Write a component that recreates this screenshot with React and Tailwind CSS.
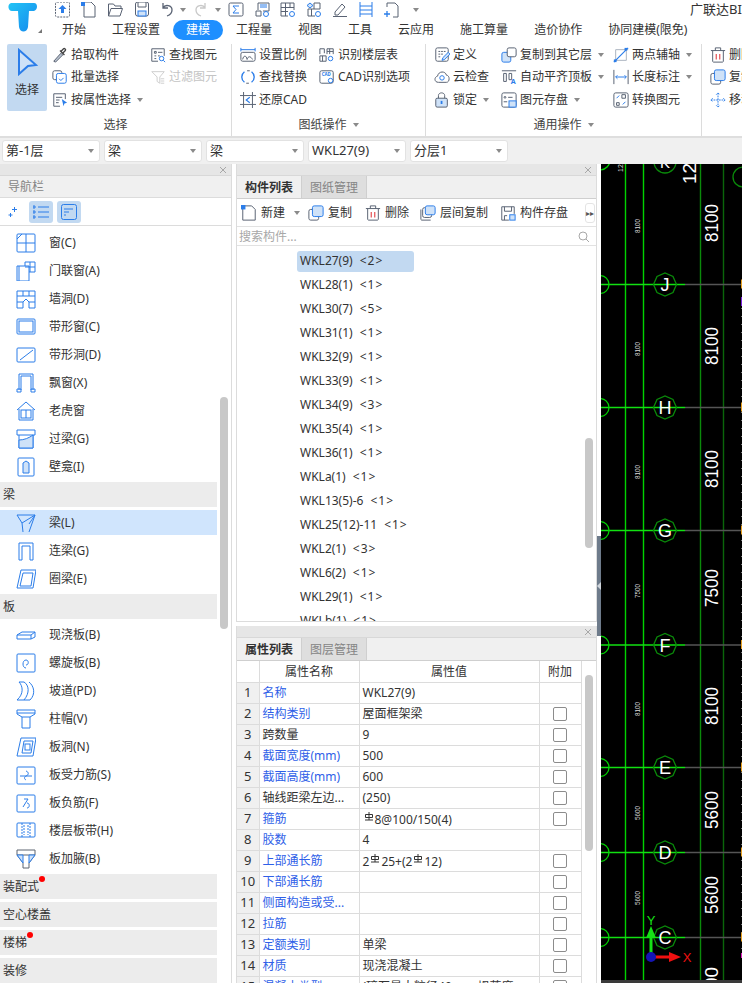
import { Fragment } from 'react';

const D = '#596273';
const B = '#2b7de9';
const L = '#cfe2f8';

const Ic = ({ children }) => (
  <span className="w-[18px] shrink-0 flex justify-start">
    <svg width="16" height="16" viewBox="0 0 18 18" fill="none" stroke={D} strokeWidth="1.1" className="shrink-0">
      {children}
    </svg>
  </span>
);

const Caret = () => <span className="inline-block w-0 h-0 border-x-[3px] border-x-transparent border-t-[4px] border-t-[#8a8a8a]" />;

const Rebar = () => (
  <svg width="10" height="10" viewBox="0 0 10 10" fill="none" stroke="#333" strokeWidth="1" className="inline-block align-[3px] mx-[1px]">
    <path d="M1 9h8M5 1v8M1.5 3.5h7v3h-7z" />
  </svg>
);

// top quick access bar
const quick = [
  <><rect x="1.5" y="-1" width="14" height="15" rx="1.5" strokeDasharray="2 1" /><path d="M8.5 2l4 4h-2.5v4h-3v-4h-2.5z" fill={B} stroke="none" /></>,
  <><path d="M3 -1h7l4 4v11h-11z" /><rect x="0" y="-1" width="4" height="4" fill={B} stroke="none" /></>,
  <><path d="M1.5 13v-12h5l1.5 2h6v2M1.5 13l2.500-7.5h11.5l-2.5 7.5z" /></>,
  <><rect x="1.5" y="-1" width="13" height="14" rx="2" /><path d="M4 -1v5h8v-5" /><rect x="4" y="8" width="8" height="5" fill={L} stroke={B} /></>,
];

const QuickIcon = ({ children }) => (
  <svg width="16" height="16" viewBox="0 -1 16 16" fill="none" stroke={D} strokeWidth="1" className="shrink-0">{children}</svg>
);

const Undo = ({ color = D }) => (
  <svg width="13" height="16" viewBox="0 0 13 16" fill="none" stroke={color} strokeWidth="1.3">
    <path d="M3 1v5h5M3 6c2-4 9-3 9 2c0 3-2 5-5 6" />
  </svg>
);

const TopBar = () => (
  <div className="h-[20px] flex items-center overflow-hidden">
    <div className="w-[5px]" />
    {quick.map((q, i) => (
      <div key={i} className="w-[26.5px] flex"><QuickIcon>{q}</QuickIcon></div>
    ))}
    <div className="w-[20px] flex"><Undo /></div>
    <div className="w-[15px] flex"><Caret /></div>
    <div className="w-[20px] flex -scale-x-100 justify-end"><Undo color="#c8c8c8" /></div>
    <div className="w-[13px] flex"><Caret /></div>
    <div className="w-[26px] flex"><QuickIcon><rect x="1" y="0" width="14" height="13" rx="1.5" stroke={D} /><path d="M11 3H5l3 3.5-3 3.5h6" stroke={B} /></QuickIcon></div>
    <div className="w-[26px] flex"><QuickIcon><path d="M2 13V8h5v5H2M4 7V0h11v8H9" /><path d="M6 2h7M6 4h7" stroke={B} /><circle cx="12" cy="11" r="2.5" stroke={B} /></QuickIcon></div>
    <div className="w-[26px] flex"><QuickIcon><path d="M1 0h13v7M1 0v13h7M1 4.5h13M1 8.5h7M5.5 0v13M10 0v4.5" /><circle cx="12" cy="11" r="2.5" stroke={B} /></QuickIcon></div>
    <div className="w-[26px] flex"><QuickIcon><path d="M2 6h12M2 6v7h7M8 6V0h6v6M5.5 6v7" /><path d="M4 0l3 2.5-3 2.5-3-2.5z" fill={L} stroke={B} /><circle cx="12" cy="11" r="2.5" stroke={B} /></QuickIcon></div>
    <div className="w-[26px] flex"><QuickIcon><path d="M3 9l7-8 3 3-7 8H3zM1 13.5h14" /></QuickIcon></div>
    <div className="w-[26px] flex"><QuickIcon><path d="M2 -1v15M14 -1v15M2 3h12M2 7h12M2 11h12" stroke={B} /></QuickIcon></div>
    <div className="w-[29px] flex"><QuickIcon><path d="M3 4V0h8l3 3v11H9" /><path d="M3 8v6M0 11h6" stroke={B} strokeWidth="1.3" /></QuickIcon></div>
    <div className="flex"><Caret /></div>
    <div className="ml-auto text-[13px] text-[#333] whitespace-nowrap w-[52px] overflow-hidden">广联达BIM</div>
  </div>
);

const tabs = ['开始', '工程设置', '建模', '工程量', '视图', '工具', '云应用', '施工算量', '造价协作', '协同建模(限免)'];

// ribbon icons
const icons = {
  pick: <><path d="M2 16l8-9 2 2-8 8z" fill="#b9c2cf" /><path d="M10 5l3-3c1-1 3 1 2 2l-3 3zM9 4l5 5" stroke="#444" strokeWidth="1.5" /></>,
  batch: <><rect x="1" y="2" width="10" height="10" rx="2" stroke={D} /><rect x="5" y="5" width="11" height="11" rx="2" fill="#fff" stroke={B} /><path d="M8 11l2 2 3-3" stroke={B} /></>,
  attr: <><path d="M15 8V2H2v14h7M4.5 6h7M4.5 9h4M4.5 12h3" /><path d="M11 8l6 4-3 1-1 3z" fill={B} stroke="none" /></>,
  find: <><path d="M9 16H2V2h14v8" /><path d="M5 5h2v2H5zM9 6h5M5 10h2M5 13h2M9 10h2" /><circle cx="13" cy="13" r="2.5" stroke={B} /><path d="M15 15l2 2" stroke={B} /></>,
  filter: <path d="M2 3h14l-5 6v7l-3-2V9zM12 11h4M12 13.5h4M12 16h4" stroke="#cfcfcf" />,
  scale: <><path d="M1 3h16M1 1v4M17 1v4" stroke={B} /><rect x="1" y="6" width="16" height="10" rx="2" /><path d="M3 14c1-5 4-5 5 0c1-4 4-4 6 0" /></>,
  replace: <><path d="M5 3C1 6 1 12 5 15M13 15c4-3 4-9 0-12" stroke={B} strokeWidth="1.5" /><path d="M8 2h3M7 16h3" /></>,
  restore: <><path d="M4 0v18M14 0v18M0 4h18M0 14h18" /><path d="M11 6L7 9l4 3" stroke={B} strokeWidth="1.3" /></>,
  layer: <><path d="M1 2h5v5M1 2v6M1 10h7v6H1zM4 10v6M9 8V2h7v6M9 5h7M12 2v6" /><circle cx="13" cy="13" r="2.5" stroke={B} /></>,
  cadopt: <><rect x="1" y="2" width="15" height="14" rx="2" /><text x="3" y="8" fontSize="5" fill={B} stroke="none" fontWeight="700">CAD</text><circle cx="13" cy="13" r="2.5" fill="#fff" stroke={B} /></>,
  define: <><rect x="2" y="1" width="14" height="15" rx="2" /><path d="M5 5h8M5 8h6M5 11h3" strokeDasharray="2 1" /><path d="M9 15l1-3 6-6 2 2-6 6z" fill={L} stroke={B} /></>,
  cloud: <><path d="M5 15c-5 0-5-6-1-7c1-6 9-6 10-1c4 0 4 8 0 8z" /><circle cx="9" cy="10" r="2.5" stroke={B} /></>,
  lock: <><rect x="2" y="7" width="13" height="10" rx="1.5" fill={L} stroke={D} /><path d="M5 7V4c0-4 7-4 7 0v3" /><rect x="7.5" y="10" width="2" height="3.5" fill={B} stroke="none" /></>,
  copyto: <><rect x="1" y="6" width="10" height="11" rx="2" fill={L} stroke={B} /><rect x="7" y="1" width="10" height="10" rx="2" fill="#fff" stroke={D} /></>,
  align: <><path d="M1 2h16M3 5h3v9H3zM9 5h3v7H9z" /><text x="11" y="17" fontSize="8" fontWeight="700" fill={B} stroke="none">A</text></>,
  store: <><rect x="1" y="1" width="16" height="16" rx="2" /><circle cx="4.5" cy="6" r="1" /><path d="M8 6h5M7 11H3" /><rect x="9" y="10" width="8" height="7" fill={L} stroke={B} /></>,
  twopt: <><path d="M3 3v13M3 3h14M15 3v12M1 15h14" stroke="#aab3bf" /><path d="M1 17L17 1" stroke={B} strokeWidth="1.3" /><rect x="13" y="1" width="3" height="3" fill={B} stroke="none" /><rect x="1" y="14" width="3" height="3" fill={B} stroke="none" /></>,
  length: <><path d="M1 1v16M17 1v16" /><path d="M3 9h12M5 7L3 9l2 2M13 7l2 2-2 2" stroke={B} /></>,
  convert: <><rect x="1" y="1" width="16" height="16" rx="2" /><path d="M4 12h3v3H4zM10 3h4v4h-4z" /><path d="M11 14l3-3M7 4L4 7" stroke={B} /></>,
  del: <><path d="M3 4v12c0 1 1 1 1 1h10s1 0 1-1V4M1 4h16M6 4V1h6v3" /><path d="M7 8v6M11 8v6" stroke="#e0393e" strokeWidth="1.2" /></>,
  copy: <><rect x="1" y="5" width="11" height="12" rx="2" stroke={D} /><rect x="5" y="1" width="12" height="12" rx="2" fill={L} stroke={B} /></>,
  move: <path d="M9 1v16M1 9h16M7 3l2-2 2 2M7 15l2 2 2-2M3 7L1 9l2 2M15 7l2 2-2 2" stroke={B} strokeDasharray="2 1" />,
  create: <><path d="M4 1h8l4 4v12H2V4" /><rect x="0" y="0" width="5" height="5" fill={B} stroke="none" /></>,
  floorcopy: <><path d="M1 5v11c0 1 1 1 1 1h10" /><rect x="3" y="3" width="10" height="11" rx="2" stroke={D} fill="#fff" /><rect x="6" y="1" width="11" height="10" rx="2" fill={L} stroke={B} /></>,
  save: <><path d="M10 17H2V2h14v8M5 2v5h8V2M5 17v-5h3" /><rect x="11" y="11" width="6" height="6" fill={L} stroke={B} /></>,
};

const RibbonItem = ({ icon, label, caret, off }) => (
  <div className="h-[22.5px] flex items-center gap-[1px] whitespace-nowrap">
    <Ic>{icons[icon]}</Ic>
    <span className={off ? 'text-[#c4c4c4]' : ''}>{label}</span>
    {caret && <span className="ml-[5px] flex"><Caret /></span>}
  </div>
);

const Col = ({ w, items }) => (
  <div className={w}>
    {items.map((it) => <RibbonItem key={it.label} {...it} />)}
  </div>
);

const Group = ({ w, label, caret, children }) => (
  <div className={`${w} shrink-0 h-[92px] border-r border-[#dcdcdc] flex flex-col`}>
    <div className="h-[69px] flex pl-[8px]">{children}</div>
    <div className="h-[23px] pt-[1px] flex items-center justify-center gap-[6px] text-[#444]">
      {label}{caret && <Caret />}
    </div>
  </div>
);

const Ribbon = () => (
  <div className="h-[98px] bg-white flex pt-[3.5px] text-[12px] text-[#333] overflow-hidden border-b-2 border-[#dedede]">
    <div className="w-[232px] shrink-0 h-[92px] border-r border-[#dcdcdc] flex flex-col">
      <div className="h-[69px] flex pl-[7px]">
        <div className="w-[40px] h-[67px] mt-[0.5px] bg-[#c2d9f1] rounded-[2px] flex flex-col items-center pt-[4px]">
          <svg width="22" height="28" viewBox="0 0 22 28" fill="none" stroke={B} strokeWidth="2">
            <path d="M3 2l17 15-8 1-9 8z" fill="#cfe2f8" />
          </svg>
          <span className="mt-[5px] text-[#333]">选择</span>
        </div>
        <div className="w-[5px]" />
        <Col w="w-[98px]" items={[
          { icon: 'pick', label: '拾取构件' },
          { icon: 'batch', label: '批量选择' },
          { icon: 'attr', label: '按属性选择', caret: true },
        ]} />
        <Col w="w-[80px]" items={[
          { icon: 'find', label: '查找图元' },
          { icon: 'filter', label: '过滤图元', off: true },
        ]} />
      </div>
      <div className="h-[23px] pt-[1px] flex items-center justify-center text-[#444]">选择</div>
    </div>
    <Group w="w-[194px]" label="图纸操作" caret>
      <Col w="w-[79px]" items={[
        { icon: 'scale', label: '设置比例' },
        { icon: 'replace', label: '查找替换' },
        { icon: 'restore', label: '还原CAD' },
      ]} />
      <Col w="w-[100px]" items={[
        { icon: 'layer', label: '识别楼层表' },
        { icon: 'cadopt', label: 'CAD识别选项' },
      ]} />
    </Group>
    <Group w="w-[276px]" label="通用操作" caret>
      <Col w="w-[67px]" items={[
        { icon: 'define', label: '定义' },
        { icon: 'cloud', label: '云检查' },
        { icon: 'lock', label: '锁定', caret: true },
      ]} />
      <Col w="w-[112px]" items={[
        { icon: 'copyto', label: '复制到其它层', caret: true },
        { icon: 'align', label: '自动平齐顶板', caret: true },
        { icon: 'store', label: '图元存盘', caret: true },
      ]} />
      <Col w="w-[85px]" items={[
        { icon: 'twopt', label: '两点辅轴', caret: true },
        { icon: 'length', label: '长度标注', caret: true },
        { icon: 'convert', label: '转换图元' },
      ]} />
    </Group>
    <div className="pl-[8px]">
      <Col w="w-[40px]" items={[
        { icon: 'del', label: '删除' },
        { icon: 'copy', label: '复制' },
        { icon: 'move', label: '移动' },
      ]} />
    </div>
  </div>
);

const selects = ['第-1层', '梁', '梁', 'WKL27(9)', '分层1'];

const SelectBar = () => (
  <div className="h-[26px] flex gap-[4px] pl-[2px] pt-[2px] bg-[#f0f0f0]">
    {selects.map((s, i) => (
      <div key={i} className="w-[98px] h-[22px] bg-white rounded-[3px] border border-[#e2e2e2] flex items-center justify-between pl-[3px] pr-[5px] text-[13px] text-[#333]">
        {s}
        <Caret />
      </div>
    ))}
  </div>
);

// nav list icons
const nav = {
  win: <><rect x="1" y="1" width="18" height="18" rx="1" /><path d="M10 1v18M1 10h18M1 6l5-5" /></>,
  door: <><path d="M1 5h12v15H1zM3 5v15" /><path d="M9 5V1h10v10h-6M14 1v10M9 6h10" /></>,
  hole: <><path d="M1 2h18v17h-6v-6l-3-3-3 3v6H1zM1 7h18M1 13h6M13 13h6M7 2v5M13 2v5" /></>,
  band: <><rect x="1" y="2" width="18" height="15" rx="1" /><rect x="3" y="4" width="14" height="11" /></>,
  bandh: <><rect x="1" y="3" width="18" height="14" rx="1" /><path d="M4 15L17 5" /></>,
  bay: <><path d="M3 17V1h14v16M5 17V3h10v14M1 16h4v3H1zM15 16h4v3h-4z" /></>,
  dormer: <><path d="M1 9l9-8 9 8M3 8v11h14V8" /><rect x="5" y="9" width="10" height="8" /><path d="M10 9v8" /></>,
  lintel: <><path d="M1 1h18v5H1zM3 6v13h14V6" /><path d="M3 19v-8c5 0 10-2 14-5v13z" fill={L} /></>,
  niche: <><rect x="2" y="1" width="16" height="18" rx="1" /><path d="M7 16V6l3-2 3 2v10z" fill={L} /></>,
  beam: <><path d="M1 2h18l-13 8zM19 2L13 19M6 10l1 9M19 2l-6 9" /></>,
  link: <><path d="M3 19V2h14v17h-3V5H6v14z" /></>,
  ring: <><path d="M5 1h15l-3 18H1z" /><path d="M7 4h10l-2 13H4z" /></>,
  slab: <><path d="M1 10l5-3h13v5l-4 2H1zM1 10h14l4-3M15 10v4" /></>,
  spiral: <><rect x="1" y="1" width="18" height="18" rx="1" /><path d="M10 12c3 0 3-5 0-5c-4 0-4 8 0 8" /></>,
  ramp: <><path d="M8 1c5 3 6 11 0 18H1c7-6 6-14 2-18zM13 1c5 4 7 12 1 18h-6" /></>,
  cap: <><path d="M1 1h18v4l-5 3v11H6V8L1 5zM1 4h18M6 8h8" /></>,
  shole: <><path d="M5 1h15l-3 18H1z" /><path d="M8 4h9l-2 12H6z" /><rect x="9" y="7" width="5" height="6" /></>,
  force: <><rect x="1" y="2" width="18" height="17" rx="1" /><path d="M4 11h12M10 6c3 1 3 4 0 5c-2 1-2 3 0 4" /></>,
  neg: <><rect x="1" y="2" width="18" height="17" rx="1" /><path d="M8 6h4l-5 8M11 10c3 0 3 5 0 5" /></>,
  strip: <><rect x="1" y="2" width="18" height="14" rx="1" /><path d="M6 2v14M14 2v14M8 4v10M12 4v10" strokeDasharray="2 1" /></>,
  haunch: <><path d="M1 1h18v5l-6 8v5H7v-5L1 6z" stroke="#5c6470" /><path d="M1 6h18" stroke="#5c6470" /><path d="M1 6h6v8zM19 6h-6v8z" fill={L} stroke={B} /></>,
};

const navItems = [
  ['win', '窗(C)'], ['door', '门联窗(A)'], ['hole', '墙洞(D)'], ['band', '带形窗(C)'], ['bandh', '带形洞(D)'],
  ['bay', '飘窗(X)'], ['dormer', '老虎窗'], ['lintel', '过梁(G)'], ['niche', '壁龛(I)'],
  [null, '梁'], ['beam', '梁(L)', true], ['link', '连梁(G)'], ['ring', '圈梁(E)'],
  [null, '板'], ['slab', '现浇板(B)'], ['spiral', '螺旋板(B)'], ['ramp', '坡道(PD)'], ['cap', '柱帽(V)'],
  ['shole', '板洞(N)'], ['force', '板受力筋(S)'], ['neg', '板负筋(F)'], ['strip', '楼层板带(H)'], ['haunch', '板加腋(B)'],
  [null, '装配式', false, 'left-[39px]'], [null, '空心楼盖'], [null, '楼梯', false, 'left-[27px]'], [null, '装修'],
];

const CloseBar = () => (
  <div className="h-[12px] shrink-0 bg-[#e6e6e6] border-b border-[#d8d8d8] flex items-center justify-end pr-[4px]">
    <svg width="8" height="8" viewBox="0 0 8 8" stroke="#a8a8a8"><path d="M1 1l6 6M7 1L1 7" /></svg>
  </div>
);

const NavPanel = () => (
  <div className="w-[232px] shrink-0 h-full bg-white border-r border-[#dcdcdc] flex flex-col text-[12px] text-[#333] relative overflow-hidden">
    <CloseBar />
    <div className="h-[22px] shrink-0 pt-[1px] bg-[#f0f0f0] border-b border-[#dcdcdc] flex items-center pl-[8px] text-[#858585]">导航栏</div>
    <div className="h-[28px] shrink-0 border-b border-[#dcdcdc] flex items-center">
      <svg width="10" height="12" viewBox="0 0 10 12" stroke={B} className="ml-[8px]"><path d="M6.5 1v5M4 3.5h5M2.5 7v4M.5 9h4" /></svg>
      <div className="ml-[11px] w-[24px] h-[22px] bg-[#c2d9f1] rounded-[3px] flex items-center justify-center">
        <svg width="16" height="14" viewBox="0 0 16 14" fill="none" stroke={B}><path d="M5 2h11M5 7h11M5 12h11M0 1h2v2H0zM0 6h2v2H0zM0 11h2v2H0z" /></svg>
      </div>
      <div className="ml-[4px] w-[24px] h-[22px] bg-[#c2d9f1] rounded-[3px] flex items-center justify-center">
        <svg width="16" height="16" viewBox="0 0 16 16" fill="none" stroke={B}><rect x=".5" y=".5" width="15" height="15" rx="2" /><path d="M3 5h9M3 8h5M3 11h2" /></svg>
      </div>
    </div>
    <div className="pt-[4px]">
      {navItems.map(([ic, label, active, dot]) => (
        ic ? (
          <div key={label} className={`w-[217px] h-[25px] mb-[3px] flex items-center pl-[16px] ${active ? 'bg-[#d0e5fd]' : ''}`}>
            <svg width="20" height="20" viewBox="0 0 20 20" fill="none" stroke={B} strokeWidth="1" className="shrink-0">{nav[ic]}</svg>
            <span className="ml-[13px]">{label}</span>
          </div>
        ) : (
          <div key={label} className="w-[217px] h-[25px] mb-[3px] flex items-center pl-[3px] bg-[#ececec] relative">
            {label}
            {dot && <span className={`absolute top-[2px] ${dot} w-[6px] h-[6px] rounded-full bg-[#f00]`} />}
          </div>
        )
      ))}
    </div>
    <div className="absolute left-[220px] top-[233px] w-[8px] h-[232px] rounded-[4px] bg-[#c8c8c8]" />
  </div>
);

const TabRow = ({ a, b }) => (
  <div className="h-[23px] shrink-0 bg-[#f0f0f0] border-b border-[#cfcfcf] flex text-[12px]">
    <div className="w-[65px] pt-[1px] flex items-center justify-center font-bold text-[#333] border-r border-[#cfcfcf]">{a}</div>
    <div className="w-[65px] pt-[1px] flex items-center justify-center bg-[#dedede] text-[#858585] border-r border-[#cfcfcf]">{b}</div>
  </div>
);

const tools = [
  ['create', '新建', 'w-[67px]', true],
  ['copy', '复制', 'w-[57px]'],
  ['del', '删除', 'w-[55px]'],
  ['floorcopy', '层间复制', 'w-[80px]'],
  ['save', '构件存盘', 'w-[85px]'],
];

const comps = [
  ['WKL27(9)', 2], ['WKL28(1)', 1], ['WKL30(7)', 5], ['WKL31(1)', 1], ['WKL32(9)', 1], ['WKL33(9)', 1],
  ['WKL34(9)', 3], ['WKL35(4)', 1], ['WKL36(1)', 1], ['WKLa(1)', 1], ['WKL13(5)-6', 1], ['WKL25(12)-11', 1],
  ['WKL2(1)', 3], ['WKL6(2)', 1], ['WKL29(1)', 1], ['WKLb(1)', 1],
];

const ComponentPanel = () => (
  <div className="h-[458px] shrink-0 flex flex-col bg-white border-x border-b border-[#dcdcdc] relative overflow-hidden text-[12px] text-[#333]">
    <CloseBar />
    <TabRow a="构件列表" b="图纸管理" />
    <div className="h-[28px] shrink-0 pt-[1px] flex items-center pl-[4px] border-b border-[#e2e2e2]">
      {tools.map(([ic, label, w, caret]) => (
        <div key={label} className={`${w} flex items-center gap-[2px]`}>
          <Ic>{icons[ic]}</Ic>
          <span>{label}</span>
          {caret && <span className="ml-[7px] flex"><Caret /></span>}
        </div>
      ))}
      <div className="w-[10px] h-[20px] border border-[#e4e4e4] rounded-[3px] flex items-center justify-center text-[8px] text-[#555]">▸▸</div>
    </div>
    <div className="h-[19px] shrink-0 pt-[1px] flex items-center justify-between pl-[2px] pr-[7px] border-b border-[#e2e2e2] text-[#a8a8a8]">
      搜索构件...
      <svg width="11" height="11" viewBox="0 0 11 11" fill="none" stroke="#a8a8a8"><circle cx="5" cy="5" r="4" /><path d="M8 8l3 3" /></svg>
    </div>
    <div className="pt-[3px] pl-[60px]">
      {comps.map(([name, n], i) => (
        <div key={name} className="h-[24px] flex items-center">
          <div className={`h-[21px] flex items-center pl-[3px] rounded-[3px] whitespace-nowrap ${i === 0 ? 'w-[117px] bg-[#c2d9f1]' : ''}`}>
            {name}<span className="ml-[7px] tracking-[1px]">{`<${n}>`}</span>
          </div>
        </div>
      ))}
    </div>
    <div className="absolute left-[348px] top-[274px] w-[8px] h-[110px] rounded-[4px] bg-[#c8c8c8]" />
  </div>
);

const props = [
  ['名称', 'WKL27(9)', 1, 0],
  ['结构类别', '屋面框架梁', 1, 1],
  ['跨数量', '9', 0, 1],
  ['截面宽度(mm)', '500', 1, 1],
  ['截面高度(mm)', '600', 1, 1],
  ['轴线距梁左边...', '(250)', 0, 1],
  ['箍筋', <Fragment><Rebar />8@100/150(4)</Fragment>, 1, 1],
  ['胶数', '4', 1, 0],
  ['上部通长筋', <Fragment>2<Rebar />25+(2<Rebar />12)</Fragment>, 1, 1],
  ['下部通长筋', '', 1, 1],
  ['侧面构造或受...', '', 1, 1],
  ['拉筋', '', 1, 1],
  ['定额类别', '单梁', 1, 1],
  ['材质', '现浇混凝土', 1, 1],
  ['混凝土类型', '(碎石最大粒径40mm 坍落度...', 1, 1],
];

const PropPanel = () => (
  <div className="flex-1 min-h-0 mt-[4px] flex flex-col bg-white border-x border-[#dcdcdc] relative overflow-hidden text-[12px] text-[#333]">
    <CloseBar />
    <TabRow a="属性列表" b="图层管理" />
    <table className="table-fixed border-collapse w-[344px]">
      <thead>
        <tr className="h-[21px]">
          <th className="w-[22px] border border-[#dcdcdc] border-l-0 border-t-0" />
          <th className="w-[100px] pt-[2px] border border-[#dcdcdc] border-t-0 font-normal">属性名称</th>
          <th className="w-[180px] pt-[2px] border border-[#dcdcdc] border-t-0 font-normal">属性值</th>
          <th className="w-[42px] pt-[2px] border border-[#dcdcdc] border-t-0 font-normal">附加</th>
        </tr>
      </thead>
      <tbody>
        {props.map(([name, val, blue, box], i) => (
          <tr key={i} className="h-[21px]">
            <td className="border border-[#dcdcdc] border-l-0 bg-[#f0f0f0] text-center text-[13px] leading-none">{i + 1}</td>
            <td className={`border border-[#dcdcdc] pl-[3px] leading-none whitespace-nowrap ${blue ? 'text-[#2f5fe8]' : ''}`}>{name}</td>
            <td className="border border-[#dcdcdc] pl-[3px] leading-none whitespace-nowrap">{val}</td>
            <td className="border border-[#dcdcdc] leading-none">
              {box ? <div className="w-[14px] h-[14px] mx-auto border border-[#8c8c8c] rounded-[2px] bg-white" /> : null}
            </td>
          </tr>
        ))}
      </tbody>
    </table>
    <div className="absolute left-[348px] top-[49px] w-[8px] h-[176px] rounded-[4px] bg-[#c8c8c8]" />
  </div>
);

const rows = [
  [284.5, 'J'], [407.5, 'H'], [530.5, 'G'], [645, 'F'], [767.5, 'E'], [852.5, 'D'], [937.5, 'C'],
];
const dims = [
  [223, '8100'], [346, '8100'], [469, '8100'], [588, '7500'], [706, '8100'], [810, '5600'], [895, '5600'],
];

const Canvas = () => (
  <div className="flex-1 h-full bg-black overflow-hidden">
    <svg viewBox="601 164 141 819" className="block w-full h-full" fontFamily="'Liberation Sans', sans-serif">
      <rect x="601" y="164" width="141" height="819" fill="#000" />
      <path d="M625.5 164V983M643.5 164V983" stroke="#00d200" strokeWidth="1.4" />
      <path d="M700.5 164V983" stroke="#0a8a0a" strokeWidth="1.4" />
      <path d="M723.5 164V983" stroke="#0a660a" strokeWidth="1.4" />
      <path d="M741.5 300V960" stroke="#777" strokeDasharray="1 7" />
      <rect x="741" y="297" width="1" height="9" fill="#7a22dd" />
      <circle cx="665" cy="162" r="11" stroke="#0a8a0a" strokeWidth="1.3" fill="none" />
      <text x="665" y="168" fontSize="15" fill="#fff" textAnchor="middle">K</text>
      <circle cx="600" cy="160" r="10" stroke="#00d200" strokeWidth="1.3" fill="none" />
      <circle cx="743" cy="177" r="10" stroke="#0a8a0a" strokeWidth="1.3" fill="none" />
      {rows.map(([y, l]) => (
        <g key={l}>
          <path d={`M601 ${y}H685`} stroke="#12e012" strokeWidth="1.3" />
          <path d={`M685 ${y}H742`} stroke="#555" strokeWidth="1.3" />
          <circle cx="600" cy={y} r="9" stroke="#00d200" strokeWidth="1.3" fill="none" />
          <polygon
            points={`${665 + 11.5},${y} ${665 + 8},${y - 8} ${665},${y - 11.5} ${665 - 8},${y - 8} ${665 - 11.5},${y} ${665 - 8},${y + 8} ${665},${y + 11.5} ${665 + 8},${y + 8}`}
            stroke="#0a8a0a"
            strokeWidth="1.3"
            fill="none"
          />
          <text x="665" y={y + 6.5} fontSize="18" fill="#fff" textAnchor="middle">{l}</text>
          <rect x="741" y={y - 5} width="1" height="9" fill="#e8a020" />
        </g>
      ))}
      {dims.map(([y, t], i) => (
        <g key={i}>
          <text transform={`translate(718 ${y}) rotate(-90)`} fontSize="19" fill="#fff" textAnchor="middle" textLength="38" lengthAdjust="spacingAndGlyphs">{t}</text>
          <text transform={`translate(640 ${y + 3}) rotate(-90)`} fontSize="7" fill="#ddd" textAnchor="middle" textLength="14" lengthAdjust="spacingAndGlyphs">{t}</text>
        </g>
      ))}
      <text transform="translate(696 184) rotate(-90)" fontSize="19" fill="#fff">12</text>
      <text transform="translate(623 172) rotate(-90)" fontSize="7" fill="#ddd">12</text>
      <text transform="translate(718 988) rotate(-90)" fontSize="19" fill="#fff">00</text>
      <path d="M651 957V934" stroke="#16e016" strokeWidth="3" />
      <polygon points="651,926 646,938 656,938" fill="#16e016" />
      <path d="M651 957H672" stroke="#f01010" strokeWidth="3" />
      <polygon points="681,957 669,952 669,962" fill="#f01010" />
      <circle cx="651" cy="957" r="5" fill="#1414b4" />
      <text x="651" y="925" fontSize="13" fill="#16e016" textAnchor="middle">Y</text>
      <text x="687" y="962" fontSize="13" fill="#f01010" textAnchor="middle">X</text>
      <rect x="741" y="953" width="1" height="5" fill="#e020c0" />
      <rect x="601" y="980" width="141" height="3" fill="#3a3a3a" />
    </svg>
  </div>
);

export default function App() {
  return (
    <div className="w-[742px] h-[983px] overflow-hidden bg-white font-['Noto_Sans','Noto_Sans_CJK_SC',sans-serif]">
      <div className="h-[40px] flex bg-white">
        <div className="w-[49px] shrink-0 relative">
          <svg width="49" height="40" viewBox="0 0 49 40">
            <defs>
              <linearGradient id="tlogo" x1="0" y1="0" x2="1" y2="1">
                <stop offset="0" stopColor="#23c4f5" />
                <stop offset="1" stopColor="#1488ee" />
              </linearGradient>
            </defs>
            <path d="M11 3h23c4 0 4 7 0 8h-5l-1 16c-1 6-8 6-9 0l-1-16h-6C8 11 7 4 11 3z" fill="url(#tlogo)" />
            <path d="M38 33h4v-4z" fill="#777" />
          </svg>
        </div>
        <div className="flex-1 min-w-0 flex flex-col">
          <TopBar />
          <div className="h-[20px] flex text-[12px] text-[#333] whitespace-nowrap">
            {tabs.map((t) => (
              <div key={t} className={`px-[13px] flex items-center ${t === '建模' ? 'bg-[#1e8fff] text-white rounded-full' : ''}`}>{t}</div>
            ))}
          </div>
        </div>
      </div>
      <Ribbon />
      <SelectBar />
      <div className="h-[819px] flex">
        <NavPanel />
        <div className="w-[361px] shrink-0 ml-[4px] h-full flex flex-col">
          <ComponentPanel />
          <PropPanel />
        </div>
        <div className="w-[4px] shrink-0 h-full bg-white pt-[372px]">
          <div className="h-[100px] bg-[#6e7b8b] flex items-center justify-center">
            <svg width="4" height="8" viewBox="0 0 4 8"><path d="M4 0v8L0 4z" fill="#cfd5dc" /></svg>
          </div>
        </div>
        <Canvas />
      </div>
    </div>
  );
}
